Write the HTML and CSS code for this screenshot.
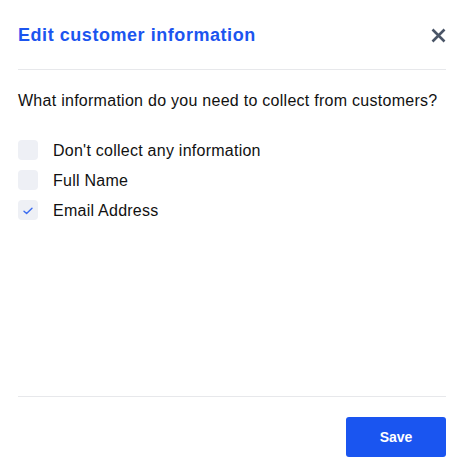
FILE: index.html
```html
<!DOCTYPE html>
<html lang="en">
<head>
<meta charset="utf-8">
<title>Edit customer information</title>
<link rel="stylesheet" href="styles.css">
</head>
<body>
<div class="dialog">
  <header class="dialog-header">
    <h1 class="dialog-title">Edit customer information</h1>
    <button class="close-btn" aria-label="Close">
      <svg width="15" height="15" viewBox="0 0 15 15"><path d="M1.5 1.5 L13.5 13.5 M13.5 1.5 L1.5 13.5" stroke="#4a5567" stroke-width="2.6" stroke-linecap="butt" fill="none"/></svg>
    </button>
  </header>
  <main class="dialog-body">
    <p class="question">What information do you need to collect from customers?</p>
    <ul class="options">
      <li class="option"><span class="box"></span><span class="label">Don't collect any information</span></li>
      <li class="option"><span class="box"></span><span class="label">Full Name</span></li>
      <li class="option"><span class="box checked"><svg width="10" height="8" viewBox="0 0 10 8"><path d="M1 4.2 L3.6 6.6 L9 1.2" stroke="#3b6cf0" stroke-width="1.4" fill="none" stroke-linecap="round" stroke-linejoin="round"/></svg></span><span class="label">Email Address</span></li>
    </ul>
  </main>
  <footer class="dialog-footer">
    <button class="save-btn">Save</button>
  </footer>
</div>
</body>
</html>
```
FILE: styles.css
```css
* { box-sizing: border-box; }
html, body { margin: 0; padding: 0; background: #fff; }
body { font-family: "Liberation Sans", Arial, Helvetica, sans-serif; color: #111; }
.dialog {
  height: 476px;
  display: flex;
  flex-direction: column;
  padding: 0 19px 0 18px;
}
.dialog-header {
  display: flex;
  align-items: center;
  justify-content: space-between;
  padding: 21px 0 20px;
  border-bottom: 1px solid #e7e8eb;
}
.dialog-title {
  margin: 0;
  font-size: 18px;
  line-height: 28px;
  font-weight: 700;
  letter-spacing: 0.55px;
  color: #1c55ef;
}
.close-btn {
  border: 0;
  background: none;
  padding: 0;
  width: 15px;
  height: 15px;
  display: flex;
}
.dialog-body {
  flex: 1;
  padding-top: 19px;
}
.question {
  margin: 0 0 27px;
  font-size: 16px;
  line-height: 24px;
  letter-spacing: 0.27px;
}
.options {
  list-style: none;
  margin: 0;
  padding: 0;
  display: flex;
  flex-direction: column;
  gap: 10px;
}
.option {
  display: flex;
  align-items: center;
  gap: 15px;
  height: 20px;
}
.box {
  width: 20px;
  height: 20px;
  border-radius: 4px;
  background: #eef0f5;
  display: flex;
  align-items: center;
  justify-content: center;
  flex-shrink: 0;
}
.box svg { margin-top: 1px; }
.label {
  font-size: 16px;
  line-height: 20px;
  padding-top: 2px;
  letter-spacing: 0.25px;
  color: #111;
}
.dialog-footer {
  border-top: 1px solid #e7e8eb;
  padding: 20px 0 19px;
  display: flex;
  justify-content: flex-end;
}
.save-btn {
  width: 100px;
  height: 40px;
  border: 0;
  border-radius: 3px;
  background: #1a55f0;
  color: #fff;
  font-family: "Liberation Sans", Arial, sans-serif;
  font-size: 14px;
  font-weight: 700;
}
```
